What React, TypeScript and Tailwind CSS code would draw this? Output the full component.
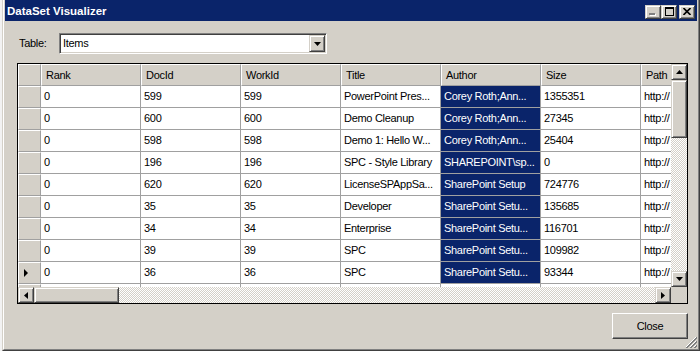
import React from 'react'

const columns = ['Rank', 'DocId', 'WorkId', 'Title', 'Author', 'Size', 'Path']

const rows: string[][] = [
  ['0', '599', '599', 'PowerPoint Pres...', 'Corey Roth;Ann...', '1355351', 'http://'],
  ['0', '600', '600', 'Demo Cleanup', 'Corey Roth;Ann...', '27345', 'http://'],
  ['0', '598', '598', 'Demo 1: Hello W...', 'Corey Roth;Ann...', '25404', 'http://'],
  ['0', '196', '196', 'SPC - Style Library', 'SHAREPOINT\\sp...', '0', 'http://'],
  ['0', '620', '620', 'LicenseSPAppSa...', 'SharePoint Setup', '724776', 'http://'],
  ['0', '35', '35', 'Developer', 'SharePoint Setu...', '135685', 'http://'],
  ['0', '34', '34', 'Enterprise', 'SharePoint Setu...', '116701', 'http://'],
  ['0', '39', '39', 'SPC', 'SharePoint Setu...', '109982', 'http://'],
  ['0', '36', '36', 'SPC', 'SharePoint Setu...', '93344', 'http://'],
  ['', '', '', '', '', '', ''],
]

// classic 3D button edge (win2k style)
const raised =
  'bg-[#d4d0c8] border border-t-[#d4d0c8] border-l-[#d4d0c8] border-r-[#404040] border-b-[#404040] shadow-[inset_1px_1px_#ffffff,inset_-1px_-1px_#808080]'

const dither =
  'bg-[image:repeating-conic-gradient(#ffffff_0_25%,#d4d0c8_0_50%)] bg-[length:2px_2px]'

function Arrow({ dir }: { dir: 'up' | 'down' | 'left' | 'right' }) {
  const pts = {
    up: '3.5,0 7,4 0,4',
    down: '0,0 7,0 3.5,4',
    left: '4,0 4,7 0,3.5',
    right: '0,0 4,3.5 0,7',
  }[dir]
  const vertical = dir === 'up' || dir === 'down'
  return (
    <svg width={vertical ? 7 : 4} height={vertical ? 4 : 7} viewBox={vertical ? '0 0 7 4' : '0 0 4 7'}>
      <polygon points={pts} fill="#000" />
    </svg>
  )
}

function ScrollButton({ dir }: { dir: 'up' | 'down' | 'left' | 'right' }) {
  return (
    <div className={`flex h-[16px] w-[16px] flex-none items-center justify-center ${raised}`}>
      <Arrow dir={dir} />
    </div>
  )
}

function CaptionButton({ children }: { children: React.ReactNode }) {
  return (
    <div className={`flex h-[14px] w-[16px] items-center justify-center ${raised}`}>{children}</div>
  )
}

export default function App() {
  return (
    <div className="flex h-[351px] w-[700px] overflow-hidden bg-[#eef0f4] font-['Liberation_Sans',Arial,sans-serif] text-[11px] tracking-[-0.3px] text-black">
      {/* bit of desktop peeking out on the left */}
      <div className="w-[2px] flex-none bg-[#f2f2f2]" />

      {/* window frame */}
      <div className="flex flex-1 flex-col border-r border-b border-l border-r-[#404040] border-b-[#404040] border-l-[#d4d0c8]">
        <div className="flex flex-1 flex-col border-r border-b border-l border-r-[#808080] border-b-[#808080] border-l-white bg-[#d4d0c8] px-[1px] pb-[1px]">
          {/* title bar */}
          <div className="flex h-[21px] flex-none items-center bg-[#0a246a] pt-[2px] pr-[2px] pl-[2px]">
            <span className="flex-1 text-[11.5px] font-bold tracking-normal text-white">DataSet Visualizer</span>
            <div className="flex items-center">
              <CaptionButton>
                <svg width="8" height="9" viewBox="0 0 8 9">
                  <rect x="1" y="7" width="6" height="2" fill="#ffffff" />
                  <rect x="0" y="6" width="6" height="2" fill="#808080" />
                </svg>
              </CaptionButton>
              <CaptionButton>
                <svg width="9" height="9" viewBox="0 0 9 9">
                  <rect x="0.5" y="0.5" width="8" height="8" fill="none" stroke="#000" />
                  <rect x="0" y="1" width="9" height="1" fill="#000" />
                </svg>
              </CaptionButton>
              <div className="ml-[2px]">
                <CaptionButton>
                  <svg width="8" height="7" viewBox="0 0 8 7">
                    <path d="M0.5 0 L7.5 7 M7.5 0 L0.5 7" stroke="#000" strokeWidth="1.6" />
                  </svg>
                </CaptionButton>
              </div>
            </div>
          </div>

          {/* dialog body */}
          <div className="relative flex flex-1 flex-col">
            <div className="flex items-center pt-[12px] pl-[14px]">
              <span className="w-[40px]">Table:</span>
              <div className="flex h-[21px] w-[268px] border border-t-[#808080] border-l-[#808080] border-r-white border-b-white p-[1px] shadow-[inset_1px_1px_#404040,inset_-1px_-1px_#d4d0c8]">
                <div className="flex flex-1 items-center bg-white pl-[2px]">Items</div>
                <div className={`flex w-[16px] items-center justify-center ${raised}`}>
                  <Arrow dir="down" />
                </div>
              </div>
            </div>

            {/* data grid */}
            <div className="mt-[9px] ml-[12px] flex h-[241px] w-[671px] flex-col border border-black">
              <div className="flex min-h-0 flex-1">
                <div className="w-[653px] overflow-hidden bg-white">
                  <div className="flex h-[22px] bg-[#d4d0c8]">
                    <div className="w-[23px] flex-none border-t border-l border-r border-b border-t-white border-l-white border-r-[#a0a0a0] border-b-[#a0a0a0]" />
                    {columns.map((c) => (
                      <div
                        key={c}
                        className="flex w-[100px] flex-none items-center border-t border-l border-r border-b border-t-white border-l-white border-r-[#a0a0a0] border-b-[#a0a0a0] pl-[4px]"
                      >
                        {c}
                      </div>
                    ))}
                  </div>
                  {rows.map((r, i) => (
                    <div key={i} className="flex h-[22px]">
                      <div className="flex w-[23px] flex-none items-center border-t border-l border-r border-b border-t-white border-l-white border-r-[#a0a0a0] border-b-[#a0a0a0] bg-[#d4d0c8] pl-[5px]">
                        {i === 8 && (
                          <svg width="4" height="8" viewBox="0 0 4 8">
                            <polygon points="0,0 4,4 0,8" fill="#000" />
                          </svg>
                        )}
                      </div>
                      {r.map((v, j) => (
                        <div
                          key={j}
                          className={`flex w-[100px] flex-none items-center overflow-hidden border-r border-b border-r-[#a0a0a0] border-b-[#a0a0a0] pl-[3px] whitespace-nowrap ${
                            j === 4 && v ? 'bg-[#0a246a] text-white' : 'bg-white'
                          }`}
                        >
                          {v}
                        </div>
                      ))}
                    </div>
                  ))}
                </div>

                {/* vertical scrollbar */}
                <div className={`flex w-[16px] flex-none flex-col ${dither}`}>
                  <ScrollButton dir="up" />
                  <div className={`h-[58px] w-[16px] ${raised}`} />
                  <div className="flex-1" />
                  <ScrollButton dir="down" />
                </div>
              </div>

              {/* horizontal scrollbar */}
              <div className="flex h-[16px] flex-none">
                <div className={`flex w-[653px] ${dither}`}>
                  <ScrollButton dir="left" />
                  <div className={`h-[16px] w-[85px] ${raised}`} />
                  <div className="flex-1" />
                  <ScrollButton dir="right" />
                </div>
                <div className="w-[16px] bg-[#d4d0c8]" />
              </div>
            </div>

            <div className="mt-[9px] ml-[12px] flex w-[671px] justify-end">
              <button
                className="h-[26px] w-[76px] border border-t-white border-l-white border-r-[#404040] border-b-[#404040] bg-[#d4d0c8] shadow-[inset_-1px_-1px_#808080] text-[11px]"
              >
                Close
              </button>
            </div>

            {/* size grip */}
            <svg className="absolute right-0 bottom-0" width="12" height="12" viewBox="0 0 12 12">
              <path d="M11 1 L1 11 M11 5 L5 11 M11 9 L9 11" stroke="#ffffff" strokeWidth="1" />
              <path d="M12 1 L1 12 M12 2 L2 12 M12 5 L5 12 M12 6 L6 12 M12 9 L9 12 M12 10 L10 12" stroke="#808080" strokeWidth="1" />
            </svg>
          </div>
        </div>
      </div>
    </div>
  )
}
